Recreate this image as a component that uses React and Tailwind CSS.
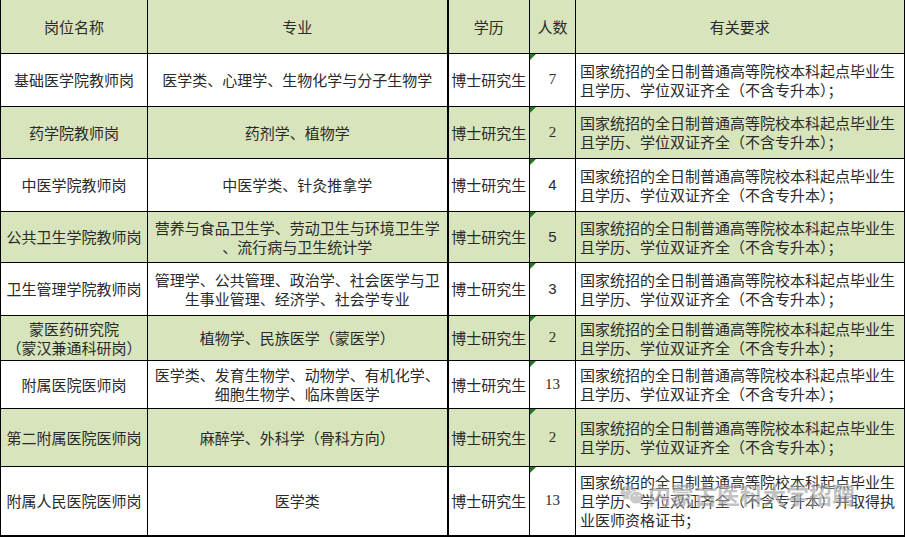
import { FaWeixin } from "react-icons/fa"

const REQ = "国家统招的全日制普通高等院校本科起点毕业生且学历、学位双证齐全（不含专升本）；"

const rows = [
    { name: ["基础医学院教师岗"], major: ["医学类、心理学、生物化学与分子生物学"], n: "7", h: "h-[53px]" },
    { name: ["药学院教师岗"], major: ["药剂学、植物学"], n: "2", h: "h-[52px]", green: true },
    { name: ["中医学院教师岗"], major: ["中医学类、针灸推拿学"], n: "4", sans: true, h: "h-[53px]" },
    { name: ["公共卫生学院教师岗"], major: ["营养与食品卫生学、劳动卫生与环境卫生学", "、流行病与卫生统计学"], n: "5", sans: true, h: "h-[51px]", green: true },
    { name: ["卫生管理学院教师岗"], major: ["管理学、公共管理、政治学、社会医学与卫", "生事业管理、经济学、社会学专业"], n: "3", sans: true, h: "h-[53px]" },
    { name: ["蒙医药研究院", "（蒙汉兼通科研岗）"], major: ["植物学、民族医学（蒙医学）"], n: "2", h: "h-[45px]", green: true },
    { name: ["附属医院医师岗"], major: ["医学类、发育生物学、动物学、有机化学、", "细胞生物学、临床兽医学"], n: "13", h: "h-[48px]" },
    { name: ["第二附属医院医师岗"], major: ["麻醉学、外科学（骨科方向）"], n: "2", h: "h-[58px]", green: true },
]

const Marker = () => (
    <span className="absolute left-0 top-0 w-0 h-0 border-t-[6px] border-r-[6px] border-t-[#1f7a1f] border-r-transparent" />
)

export default function App() {
    return (
        <div className="w-[905px] h-[538px] bg-white overflow-hidden text-[#2a2a2a] text-[15px] leading-[19px]" style={{ fontFamily: '"Noto Sans CJK SC", "Noto Sans", sans-serif' }}>
            <table className="border-collapse table-fixed w-[904px]">
                <colgroup>
                    <col className="w-[147px]" />
                    <col className="w-[300px]" />
                    <col className="w-[82px]" />
                    <col className="w-[46px]" />
                    <col className="w-[329px]" />
                </colgroup>
                <thead>
                    <tr className="h-[53px] bg-[#d8e4bc]">
                        <th className="font-normal border-x border-b border-black">岗位名称</th>
                        <th className="font-normal border-x border-b border-black">专业</th>
                        <th className="font-normal border-l-2 border-r border-b border-black">学历</th>
                        <th className="font-normal border-x border-b border-black">人数</th>
                        <th className="font-normal border-l border-r-2 border-b border-black">有关要求</th>
                    </tr>
                </thead>
                <tbody>
                    {rows.map((r, i) => (
                        <tr key={i} className={`${r.h} ${r.green ? "bg-[#d8e4bc]" : "bg-white"}`}>
                            <td className="border border-black text-center px-1">
                                {r.name.map((t) => <div key={t}>{t}</div>)}
                            </td>
                            <td className="border border-black text-center px-1">
                                {r.major.map((t) => <div key={t}>{t}</div>)}
                            </td>
                            <td className="border-l-2 border-r border-y border-black text-center">博士研究生</td>
                            <td className="relative border border-black text-center" style={{ fontFamily: r.sans ? '"Liberation Sans", sans-serif' : '"Liberation Serif", serif' }}>
                                <Marker />
                                {r.n}
                            </td>
                            <td className="border-l border-r-2 border-y border-black pl-[4px] pr-1 text-left break-all">{REQ}</td>
                        </tr>
                    ))}
                    <tr className="h-[70px] bg-white">
                        <td className="border border-black border-b-2 text-center px-1">附属人民医院医师岗</td>
                        <td className="border border-black border-b-2 text-center px-1">医学类</td>
                        <td className="border-l-2 border-r border-t border-b-2 border-black text-center">博士研究生</td>
                        <td className="relative border border-black border-b-2 text-center" style={{ fontFamily: '"Liberation Serif", serif' }}>
                            <Marker />
                            13
                        </td>
                        <td className="relative border-l border-r-2 border-t border-b-2 border-black pl-[4px] pr-1 text-left break-all">
                            国家统招的全日制普通高等院校本科起点毕业生且学历、学位双证齐全（不含专升本）并取得执业医师资格证书；
                            <div className="absolute left-[44px] top-[16px] flex items-center gap-1 opacity-60 pointer-events-none">
                                <FaWeixin className="w-[24px] h-[24px] text-[#a8a8a8]" />
                                <span className="text-[23px] font-bold leading-none text-[#9a9a9a] [text-shadow:0_0_2px_#fff,0_0_3px_#fff]">内蒙古医科大学招聘</span>
                            </div>
                        </td>
                    </tr>
                </tbody>
            </table>
        </div>
    )
}
